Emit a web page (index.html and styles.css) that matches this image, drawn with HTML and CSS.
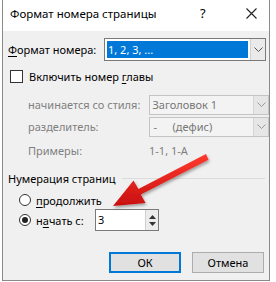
FILE: index.html
```html
<!DOCTYPE html>
<html lang="ru">
<head>
  <meta charset="UTF-8">
  <title>Формат номера страницы</title>
  <link rel="stylesheet" href="styles.css">
</head>
<body>
  <div class="dialog">
    <div class="titlebar">
      <span class="title">Формат номера страницы</span>
      <span class="help">?</span>
      <span class="close">
        <svg width="11" height="11" viewBox="0 0 11 11"><path d="M0.5 0.5 L10.5 10.5 M10.5 0.5 L0.5 10.5" stroke="#222" stroke-width="1.1" fill="none"/></svg>
      </span>
    </div>

    <div class="content">
      <div class="row format-row">
        <label class="label"><u>Ф</u>ормат номера:</label>
        <div class="select active">
          <span class="value"><span class="selected">1, 2, 3, ...</span></span>
          <span class="arrow"><svg width="9" height="5" viewBox="0 0 9 5"><path d="M0.5 0.5 L4.5 4.5 L8.5 0.5" stroke="#555" fill="none"/></svg></span>
        </div>
      </div>

      <div class="row check-row">
        <span class="checkbox"></span>
        <span>Включить номер <u>г</u>лавы</span>
      </div>

      <div class="row sub-row style-row">
        <span class="sub-label">начинается со стиля:</span>
        <div class="select disabled">
          <span class="value">Заголовок 1</span>
          <span class="arrow"><svg width="9" height="5" viewBox="0 0 9 5"><path d="M0.5 0.5 L4.5 4.5 L8.5 0.5" stroke="#999" fill="none"/></svg></span>
        </div>
      </div>

      <div class="row sub-row">
        <span class="sub-label">разделитель:</span>
        <div class="select disabled">
          <span class="value"><span class="dash">-</span>(дефис)</span>
          <span class="arrow"><svg width="9" height="5" viewBox="0 0 9 5"><path d="M0.5 0.5 L4.5 4.5 L8.5 0.5" stroke="#999" fill="none"/></svg></span>
        </div>
      </div>

      <div class="row sub-row examples">
        <span class="sub-label">Примеры:</span>
        <span class="example-value">1-1, 1-A</span>
      </div>

      <div class="group-title">
        <span>Нумерация страниц</span>
        <span class="rule"></span>
      </div>

      <div class="row radio-row">
        <span class="radio"></span>
        <span><u>п</u>родолжить</span>
      </div>

      <div class="row radio-row start-row">
        <span class="radio checked"></span>
        <span class="start-label">н<u>а</u>чать с:</span>
        <div class="spin">
          <span class="spin-value">3</span>
          <span class="spin-buttons">
            <svg width="7" height="4" viewBox="0 0 7 4"><path d="M0 4 L3.5 0 L7 4 Z" fill="#333"/></svg>
            <svg width="7" height="4" viewBox="0 0 7 4"><path d="M0 0 L3.5 4 L7 0 Z" fill="#333"/></svg>
          </span>
        </div>
      </div>

      <div class="buttons">
        <button class="btn default">ОК</button>
        <button class="btn">Отмена</button>
      </div>
    </div>

    <svg class="pointer" width="276" height="282" viewBox="0 0 276 282">
      <defs>
        <linearGradient id="red" x1="0" y1="0" x2="0" y2="1">
          <stop offset="0" stop-color="#ff3b2f"/>
          <stop offset="1" stop-color="#c80f0f"/>
        </linearGradient>
        <filter id="shadow" x="-20%" y="-20%" width="140%" height="140%">
          <feDropShadow dx="1" dy="2" stdDeviation="1.6" flood-color="#000" flood-opacity="0.35"/>
        </filter>
      </defs>
      <path d="M207.5 159.8 L205 154 L137.4 189 L132.5 180.5 L112 206 L144.5 203 L139.8 194.5 Z" fill="url(#red)" filter="url(#shadow)"/>
    </svg>
  </div>
</body>
</html>
```

FILE: styles.css
```css
* {
  margin: 0;
  padding: 0;
  box-sizing: border-box;
}

body {
  font-family: "Noto Sans", "Open Sans", sans-serif;
  font-size: 11px;
  line-height: 15px;
  color: #000;
  background-color: #ffffff;
  width: 276px;
  height: 282px;
  overflow: hidden;
  white-space: nowrap;
}

/* Window */
.dialog {
  position: relative;
  margin-left: 2px;
  width: 268px;
  height: 281px;
  border: 1px solid #8a8a8a;
  border-top: none;
  background-color: #f0f0f0;
}

.titlebar {
  height: 31px;
  background-color: #fff;
  display: flex;
  align-items: center;
  padding: 0 0 4px 7px;
}

.title {
  flex: 1;
  font-size: 11.5px;
}

.help {
  width: 16px;
  margin-right: 30px;
  font-size: 13px;
}

.close {
  display: flex;
  margin-right: 12px;
}

.content {
  padding: 7px 0 0 4px;
}

.row {
  display: flex;
  align-items: center;
}

u {
  text-decoration-thickness: 1px;
  text-underline-offset: 2px;
}

/* Format select */
.format-row {
  height: 23px;
}

.label {
  width: 97px;
  padding-left: 1px;
}

.select {
  display: flex;
  height: 23px;
  width: 162px;
  border: 1px solid #7a7a7a;
  background-color: #fff;
}

.select .value {
  flex: 1;
  display: flex;
  align-items: center;
  padding: 2px;
}

.selected {
  display: block;
  width: 100%;
  height: 100%;
  background-color: #0078d7;
  color: #fff;
  line-height: 17px;
  padding-left: 1px;
}

.select .arrow {
  width: 15px;
  display: flex;
  align-items: center;
  justify-content: center;
  background-color: #eaeaea;
  border-left: 1px solid #d0d0d0;
}

.select.disabled {
  width: 121px;
  height: 20px;
  border-color: #c4c4c4;
  background-color: #f3f3f3;
  color: #777;
}

.select.disabled .value {
  padding-left: 3px;
}

.select.disabled .arrow {
  background-color: #e6e6e6;
  border-left-color: #d6d6d6;
}

.dash {
  width: 20px;
  padding-left: 1px;
}

/* Chapter checkbox */
.check-row {
  margin-top: 7px;
  height: 16px;
}

.checkbox {
  width: 13px;
  height: 13px;
  border: 1px solid #333;
  background-color: #fff;
  margin: 0 6px 0 3px;
}

.sub-row {
  height: 21px;
  margin-top: 1px;
  color: #808080;
}

.style-row {
  margin-top: 10px;
}

.sub-label {
  width: 142px;
  padding-left: 21px;
}

.examples {
  height: 20px;
  margin-top: 3px;
}

.example-value {
  color: #808080;
}

/* Page numbering group */
.group-title {
  display: flex;
  align-items: center;
  margin-top: 8px;
  height: 20px;
  padding-left: 1px;
}

.rule {
  flex: 1;
  height: 1px;
  margin: 1px 4px 0 6px;
  background-color: #dcdcdc;
}

.radio-row {
  height: 18px;
  margin-top: 3px;
}

.radio {
  width: 12px;
  height: 12px;
  border: 1px solid #333;
  border-radius: 50%;
  background-color: #fff;
  margin: 0 5px 0 12px;
  display: flex;
  align-items: center;
  justify-content: center;
}

.radio.checked::after {
  content: "";
  width: 6px;
  height: 6px;
  border-radius: 50%;
  background-color: #222;
}

.start-row {
  height: 22px;
  margin-top: 0;
}

.start-label {
  width: 59px;
}

.spin {
  display: flex;
  width: 64px;
  height: 22px;
  border: 1px solid #7a7a7a;
  background-color: #fff;
}

.spin-value {
  flex: 1;
  padding-left: 2px;
  line-height: 20px;
}

.spin-buttons {
  width: 13px;
  display: flex;
  flex-direction: column;
  align-items: center;
  justify-content: center;
  gap: 3px;
  background-color: #ececec;
  border-left: 1px solid #d0d0d0;
}

/* Buttons */
.buttons {
  display: flex;
  justify-content: flex-end;
  gap: 11px;
  margin-top: 21px;
  padding-right: 5px;
}

.btn {
  width: 72px;
  height: 21px;
  font-family: inherit;
  font-size: 11px;
  background-color: #e1e1e1;
  border: 1px solid #adadad;
}

.btn.default {
  border: 2px solid #0078d7;
}

/* Red annotation arrow */
.pointer {
  position: absolute;
  top: 0;
  left: -2px;
  pointer-events: none;
}
```
